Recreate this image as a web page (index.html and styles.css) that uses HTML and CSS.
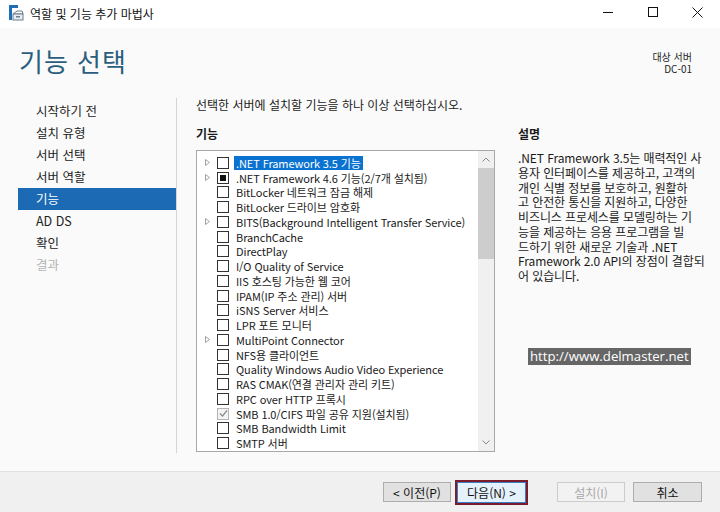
FILE: index.html
```html
<!DOCTYPE html>
<html lang="ko">
<head>
    <meta charset="UTF-8">
    <title>역할 및 기능 추가 마법사</title>
    <link rel="stylesheet" href="styles.css">
</head>
<body>
<div class="window">

    <div class="titlebar">
        <svg class="app-icon" width="16" height="16" viewBox="0 0 16 16">
            <rect x="1" y="0" width="3" height="15" fill="#1f6fb5"/>
            <rect x="1" y="0" width="9" height="3" fill="#1f6fb5"/>
            <path d="M5 9 L9 6 L14 6 L15 9 Z" fill="none" stroke="#6b7d8c" stroke-width="1"/>
            <rect x="5" y="9" width="10" height="6" fill="#e8edf1" stroke="#6b7d8c" stroke-width="1"/>
            <rect x="8" y="11" width="4" height="1.5" fill="#6b7d8c"/>
        </svg>
        <span class="title-text">역할 및 기능 추가 마법사</span>
        <div class="win-controls">
            <span class="ctl"><svg width="10" height="10" viewBox="0 0 10 10"><line x1="0" y1="5.5" x2="10" y2="5.5" stroke="#111" stroke-width="1"/></svg></span>
            <span class="ctl"><svg width="10" height="10" viewBox="0 0 10 10"><rect x="0.5" y="0.5" width="9" height="9" fill="none" stroke="#111" stroke-width="1"/></svg></span>
            <span class="ctl"><svg width="11" height="11" viewBox="0 0 11 11"><path d="M0.5 0.5 L10.5 10.5 M10.5 0.5 L0.5 10.5" stroke="#111" stroke-width="1"/></svg></span>
        </div>
    </div>

    <div class="main">
        <div class="header">
            <h1>기능 선택</h1>
            <div class="target">
                <div>대상 서버</div>
                <div>DC-01</div>
            </div>
        </div>

        <div class="content">
            <ul class="nav">
                <li>시작하기 전</li>
                <li>설치 유형</li>
                <li>서버 선택</li>
                <li>서버 역할</li>
                <li class="active">기능</li>
                <li>AD DS</li>
                <li>확인</li>
                <li class="disabled">결과</li>
            </ul>

            <div class="pane">
                <p class="intro">선택한 서버에 설치할 기능을 하나 이상 선택하십시오.</p>
                <div class="columns">
                    <div class="features">
                        <div class="col-title">기능</div>
                        <div class="listbox">
                            <div class="rows" id="rows"></div>
                            <div class="scrollbar">
                                <div class="sb-btn"><svg width="8" height="5" viewBox="0 0 8 5"><path d="M0.5 4.5 L4 1 L7.5 4.5" fill="none" stroke="#888" stroke-width="1"/></svg></div>
                                <div class="sb-thumb"></div>
                                <div class="sb-track"></div>
                                <div class="sb-btn"><svg width="8" height="5" viewBox="0 0 8 5"><path d="M0.5 0.5 L4 4 L7.5 0.5" fill="none" stroke="#888" stroke-width="1"/></svg></div>
                            </div>
                        </div>
                    </div>
                    <div class="desc">
                        <div class="col-title">설명</div>
                        <p class="desc-text">.NET Framework 3.5는 매력적인 사<br>용자 인터페이스를 제공하고, 고객의<br>개인 식별 정보를 보호하고, 원활하<br>고 안전한 통신을 지원하고, 다양한<br>비즈니스 프로세스를 모델링하는 기<br>능을 제공하는 응용 프로그램을 빌<br>드하기 위한 새로운 기술과 .NET<br>Framework 2.0 API의 장점이 결합되<br>어 있습니다.</p>
                        <div class="watermark">http://www.delmaster.net</div>
                    </div>
                </div>
            </div>
        </div>
    </div>

    <div class="footer">
        <button class="btn prev">&lt; 이전(P)</button>
        <button class="btn next">다음(N) &gt;</button>
        <button class="btn install" disabled>설치(I)</button>
        <button class="btn cancel">취소</button>
    </div>
</div>

<script>
    // 기능 목록: [이름, 하위 항목 여부, 상태, 선택됨]
    const features = [
        ['.NET Framework 3.5 기능', true, '', true],
        ['.NET Framework 4.6 기능(2/7개 설치됨)', true, 'partial'],
        ['BitLocker 네트워크 잠금 해제', false, ''],
        ['BitLocker 드라이브 암호화', false, ''],
        ['BITS(Background Intelligent Transfer Service)', true, ''],
        ['BranchCache', false, ''],
        ['DirectPlay', false, ''],
        ['I/O Quality of Service', false, ''],
        ['IIS 호스팅 가능한 웹 코어', false, ''],
        ['IPAM(IP 주소 관리) 서버', false, ''],
        ['iSNS Server 서비스', false, ''],
        ['LPR 포트 모니터', false, ''],
        ['MultiPoint Connector', true, ''],
        ['NFS용 클라이언트', false, ''],
        ['Quality Windows Audio Video Experience', false, ''],
        ['RAS CMAK(연결 관리자 관리 키트)', false, ''],
        ['RPC over HTTP 프록시', false, ''],
        ['SMB 1.0/CIFS 파일 공유 지원(설치됨)', false, 'installed'],
        ['SMB Bandwidth Limit', false, ''],
        ['SMTP 서버', false, '']
    ];

    const rows = document.getElementById('rows');
    features.forEach(f => {
        const row = document.createElement('div');
        row.className = 'row';

        const exp = document.createElement('span');
        exp.className = 'expander';
        if (f[1]) {
            exp.innerHTML = '<svg width="5" height="7" viewBox="0 0 5 7"><path d="M0.5 0.5 L4.5 3.5 L0.5 6.5 Z" fill="none" stroke="#a0a0a0" stroke-width="1"/></svg>';
        }
        row.appendChild(exp);

        const box = document.createElement('span');
        box.className = 'check';
        if (f[2] === 'partial') box.classList.add('partial');
        if (f[2] === 'installed') {
            box.classList.add('installed');
            box.innerHTML = '<svg width="9" height="9" viewBox="0 0 9 9"><path d="M1 4.5 L3.5 7 L8 1.5" fill="none" stroke="#8a8a8a" stroke-width="1.2"/></svg>';
        }
        row.appendChild(box);

        const label = document.createElement('span');
        label.className = 'label';
        if (f[3]) label.classList.add('selected');
        label.textContent = f[0];
        row.appendChild(label);

        rows.appendChild(row);
    });
</script>
</body>
</html>
```

FILE: styles.css
```css
html, body {
    margin: 0;
    padding: 0;
}
body {
    font-family: "Noto Sans CJK KR", "Noto Sans", sans-serif;
    font-size: 12px;
    color: #1a1a1a;
    background-color: #fafafa;
}
.window {
    width: 720px;
    height: 512px;
    display: flex;
    flex-direction: column;
    overflow: hidden;
}
.titlebar {
    height: 28px;
    background-color: #fff;
    display: flex;
    align-items: center;
    padding-left: 8px;
}
.app-icon {
    margin-right: 6px;
    margin-top: -2px;
}
.title-text {
    font-size: 12px;
    color: #111;
    margin-top: -1px;
}
.win-controls {
    margin-left: auto;
    display: flex;
}
.ctl {
    width: 45px;
    height: 28px;
    display: flex;
    align-items: center;
    justify-content: center;
    margin-top: -4px;
}
.main {
    flex: 1;
    background-color: #fafafa;
    display: flex;
    flex-direction: column;
}
.header {
    display: flex;
    justify-content: space-between;
    padding: 0 28px 0 19px;
    height: 70px;
}
.header h1 {
    margin: 14px 0 0 0;
    font-size: 26px;
    font-weight: normal;
    color: #2a5e7e;
    letter-spacing: 1px;
}
.target {
    text-align: right;
    font-size: 10px;
    line-height: 11.5px;
    color: #222;
    margin-top: 23px;
}
.content {
    display: flex;
    flex: 1;
}
.nav {
    list-style: none;
    margin: 0;
    padding: 2px 0 0 18px;
    width: 158px;
    border-right: 1px solid #d4d4d4;
    margin-bottom: 16px;
}
.nav li {
    height: 22px;
    line-height: 22px;
    padding-left: 18px;
    font-size: 12.5px;
    color: #222;
}
.nav li.active {
    background-color: #1b6ab3;
    color: #fff;
}
.nav li.disabled {
    color: #b4b4b4;
}
.pane {
    flex: 1;
    padding-left: 19px;
}
.intro {
    margin: 0;
    line-height: 14px;
}
.columns {
    display: flex;
    margin-top: 15px;
}
.col-title {
    font-weight: bold;
    height: 18px;
    line-height: 14px;
}
.features {
    width: 299px;
}
.features .col-title {
    height: 23px;
}
.listbox {
    height: 300px;
    border: 1px solid #a8a8a8;
    background-color: #fff;
    display: flex;
}
.rows {
    flex: 1;
    padding-top: 4.5px;
    overflow: hidden;
}
.row {
    height: 14.75px;
    display: flex;
    align-items: center;
    white-space: nowrap;
    font-size: 11px;
    letter-spacing: -0.1px;
}
.expander {
    width: 19px;
    flex-shrink: 0;
    display: flex;
    justify-content: center;
    padding-left: 1px;
}
.check {
    width: 10px;
    height: 10px;
    flex-shrink: 0;
    border: 1px solid #333;
    background-color: #fff;
    margin-right: 7px;
    display: flex;
    align-items: center;
    justify-content: center;
}
.check.partial::after {
    content: "";
    width: 6px;
    height: 6px;
    background-color: #111;
}
.check.installed {
    border-color: #b4b4b4;
    background-color: #f4f4f4;
}
.label {
    padding: 0 2px;
    margin-left: -2px;
    line-height: 14px;
}
.label.selected {
    background-color: #0a72d0;
    color: #fff;
}
.scrollbar {
    width: 16px;
    flex-shrink: 0;
    display: flex;
    flex-direction: column;
    background-color: #f0f0f0;
}
.sb-btn {
    height: 17px;
    display: flex;
    align-items: center;
    justify-content: center;
}
.sb-thumb {
    height: 91px;
    background-color: #cdcdcd;
}
.sb-track {
    flex: 1;
}
.desc {
    padding-left: 23px;
    width: 190px;
}
.desc-text {
    margin: 6px 0 0 0;
    line-height: 14.75px;
    white-space: nowrap;
    letter-spacing: -0.1px;
}
.watermark {
    display: inline-block;
    margin: 64px 0 0 10px;
    background-color: #666;
    color: #fff;
    font-family: "Open Sans", "Noto Sans", sans-serif;
    font-size: 13.2px;
    line-height: 17px;
    padding: 0 2px;
}
.footer {
    height: 40px;
    border-top: 1px solid #e0e0e0;
    background-color: #f0f0f0;
    display: flex;
    align-items: center;
    justify-content: flex-end;
    padding-right: 18px;
    margin-top: 2px;
}
.btn {
    font-family: "Noto Sans CJK KR", "Noto Sans", sans-serif;
    font-size: 12px;
    height: 20px;
    width: 68px;
    padding: 0;
    border: 1px solid #adadad;
    background-color: #e1e1e1;
    color: #111;
}
.btn.prev {
    width: 68px;
    margin-right: 4px;
}
.btn.next {
    width: 73px;
    height: 25px;
    border: 2px solid #7b1c2c;
    box-shadow: inset 0 0 0 1px #3d7fc7;
    background-color: #e5f1fb;
    margin-right: 29px;
}
.btn.install {
    background-color: #f2f2f2;
    border-color: #cccccc;
    color: #a8a8a8;
    margin-right: 8px;
}
.btn.cancel {
    width: 69px;
}
```
